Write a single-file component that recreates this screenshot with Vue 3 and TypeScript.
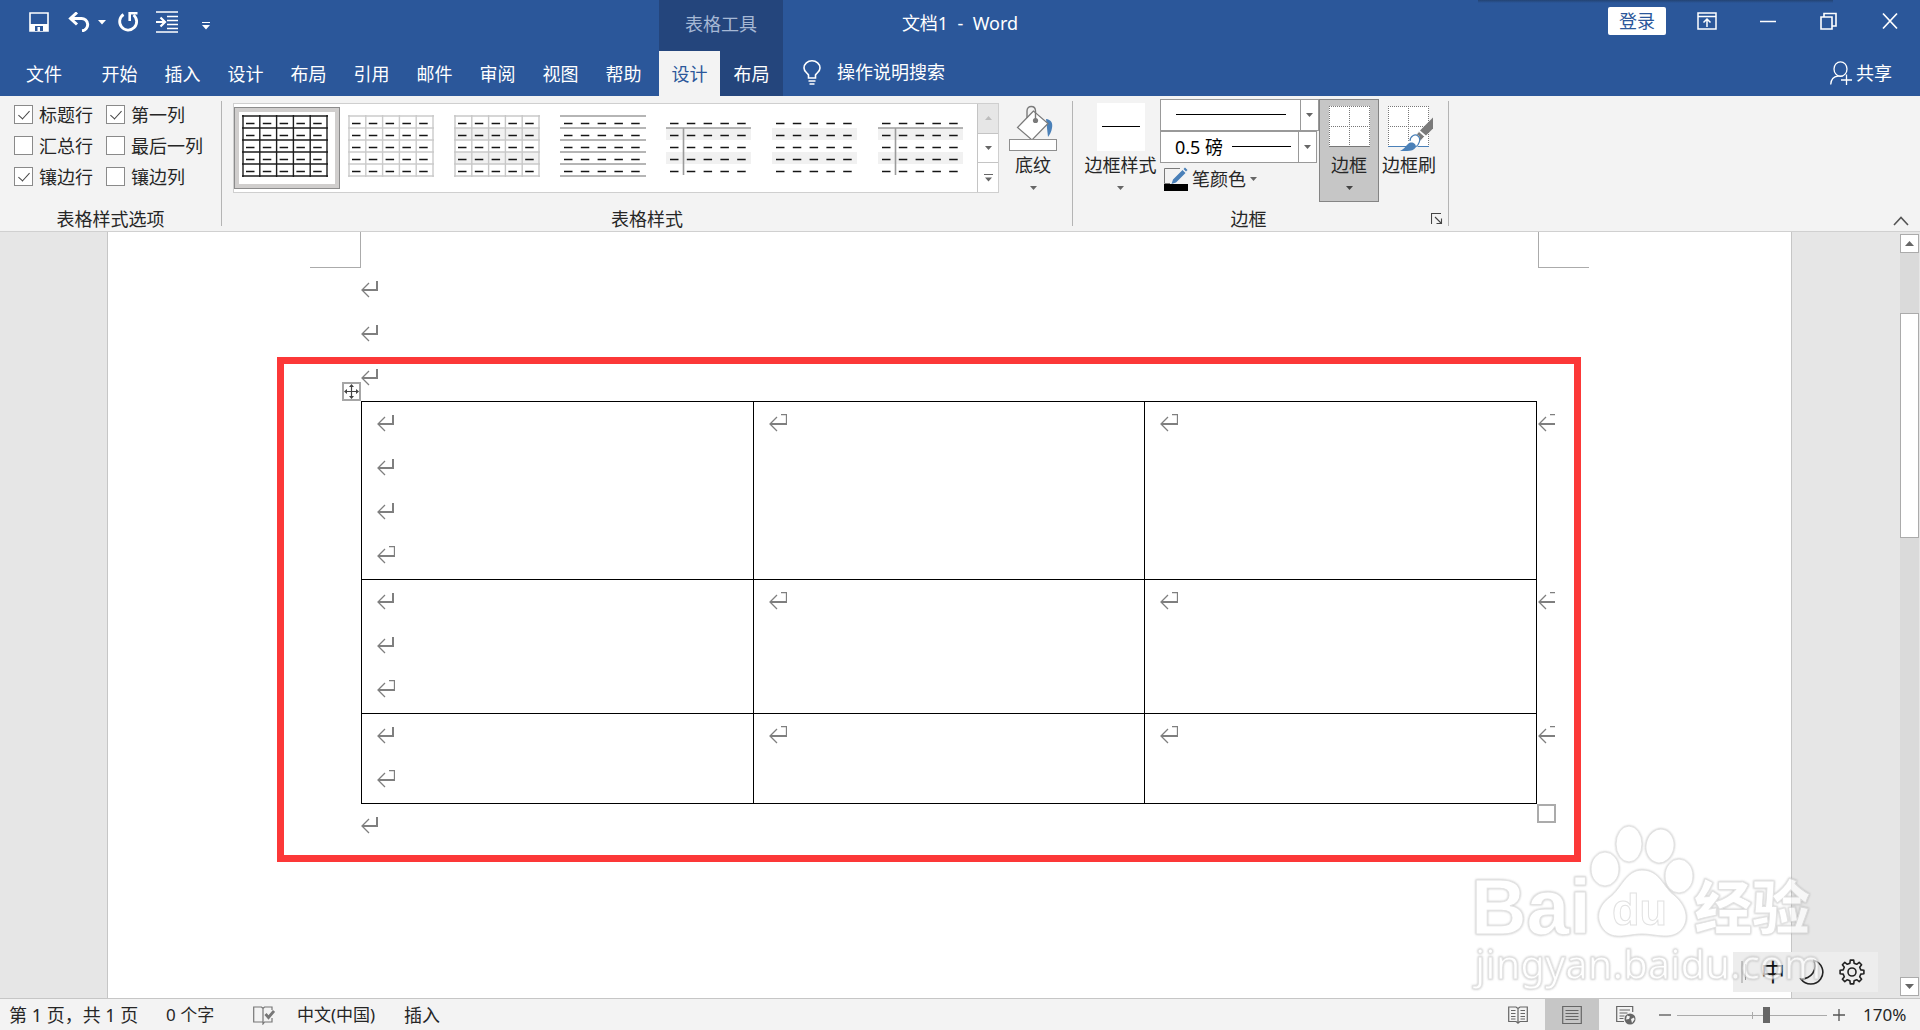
<script setup lang="ts">
import { ref } from 'vue'

interface StyleOption {
  id: string
  label: string
  checked: boolean
}

interface Thumb {
  id: number
  kind: 'grid' | 'lines' | 'plain'
  stroke: string
  banded: boolean
  cross: boolean
}

const tabs: string[] = ['开始', '插入', '设计', '布局', '引用', '邮件', '审阅', '视图', '帮助']

const options = ref<StyleOption[]>([
  { id: 'header-row', label: '标题行', checked: true },
  { id: 'first-col', label: '第一列', checked: true },
  { id: 'total-row', label: '汇总行', checked: false },
  { id: 'last-col', label: '最后一列', checked: false },
  { id: 'band-row', label: '镶边行', checked: true },
  { id: 'band-col', label: '镶边列', checked: false },
])

const thumbs: Thumb[] = [
  { id: 0, kind: 'grid', stroke: '#1c1c1c', banded: false, cross: false },
  { id: 1, kind: 'grid', stroke: '#cbcbcb', banded: false, cross: false },
  { id: 2, kind: 'grid', stroke: '#c8c8c8', banded: true, cross: false },
  { id: 3, kind: 'lines', stroke: '#9c9c9c', banded: false, cross: false },
  { id: 4, kind: 'plain', stroke: '#9c9c9c', banded: true, cross: true },
  { id: 5, kind: 'plain', stroke: '#9c9c9c', banded: true, cross: false },
  { id: 6, kind: 'plain', stroke: '#9c9c9c', banded: true, cross: true },
]
const steps: number[] = [0, 1, 2, 3, 4, 5]
const cells: number[] = [0, 1, 2, 3, 4]

// Paragraph count of the first cell in each table row
const rows: number[] = [4, 3, 2]
const zoom = ref<number>(60)
const search = ref<string>('')

function gear(teeth: number, outer: number, inner: number): string {
  const step = (Math.PI * 2) / teeth
  const points: string[] = []
  for (let i = 0; i < teeth; i++) {
    const a = i * step - Math.PI / 2
    const corners: [number, number][] = [
      [inner, a - step * 0.3],
      [outer, a - step * 0.18],
      [outer, a + step * 0.18],
      [inner, a + step * 0.3],
    ]
    for (const [r, t] of corners) {
      points.push(`${(13 + r * Math.cos(t)).toFixed(1)} ${(13 + r * Math.sin(t)).toFixed(1)}`)
    }
  }
  return `M${points.join('L')}Z`
}
const gearPath = gear(8, 12, 9)
</script>

<template>
  <div class="app">
    <header class="header">
      <div class="titlebar">
        <div class="title-left">
          <div class="quick">
            <button class="icon-btn save" aria-label="保存">
              <svg width="20" height="20" viewBox="0 0 20 20">
                <path d="M1 1h18v18H1z" fill="none" stroke="#fff" stroke-width="1.6" />
                <path d="M1 12h18v7H1z" fill="#fff" />
                <path d="M6 14h8v5h-3v-4H8.500v4H6z" fill="#2b579a" />
              </svg>
            </button>
            <button class="icon-btn undo" aria-label="撤消">
              <svg width="22" height="20" viewBox="0 0 22 20">
                <path d="M2 6.500h11a6 6 0 0 1 1 12.300" fill="none" stroke="#fff" stroke-width="3" />
                <path d="M9 .5L2.500 6.500L9 12.500" fill="none" stroke="#fff" stroke-width="3" />
              </svg>
            </button>
            <button class="icon-btn undo-more" aria-label="撤消选项">
              <svg width="8" height="5" viewBox="0 0 8 5"><path d="M0 0h8L4 4.500z" fill="#fff" /></svg>
            </button>
            <button class="icon-btn redo" aria-label="重复">
              <svg width="22" height="22" viewBox="0 0 22 22">
                <path d="M6.500 3.500A8.500 8.500 0 1 0 16.500 4" fill="none" stroke="#fff" stroke-width="2.800" />
                <path d="M20.500 2.200H12.700V10" fill="none" stroke="#fff" stroke-width="2.600" />
              </svg>
            </button>
            <button class="icon-btn indent" aria-label="增加缩进量">
              <svg width="22" height="22" viewBox="0 0 22 22">
                <path d="M0 1h22M11 5.500h11M11 9.500h11M11 13.500h11M11 17.500h11M0 21h22" stroke="#fff" stroke-width="1.300" />
                <path d="M0 11h8M4.500 6.500L9 11L4.500 15.500" fill="none" stroke="#fff" stroke-width="2.200" />
              </svg>
            </button>
            <button class="icon-btn customize" aria-label="自定义快速访问工具栏">
              <svg width="8" height="8" viewBox="0 0 8 8"><path d="M0 0h8v1H0zM0 3h8L4 7.500z" fill="#fff" /></svg>
            </button>
          </div>
          <div class="context-title">表格工具</div>
        </div>
        <h1 class="doc-title">文档1&nbsp; -&nbsp; Word</h1>
        <div class="window">
          <button class="login">登录</button>
          <button class="win-btn" aria-label="功能区显示选项">
            <svg width="20" height="18" viewBox="0 0 20 18">
              <path d="M1 1h18v16H1zM1 4.500h18M10 15V7.500M6.500 10.500L10 7l3.500 3.500" fill="none" stroke="#fff" stroke-width="1.500" />
            </svg>
          </button>
          <button class="win-btn" aria-label="最小化">
            <svg width="16" height="18" viewBox="0 0 16 18"><path d="M0 9.500h16" stroke="#fff" stroke-width="1.500" /></svg>
          </button>
          <button class="win-btn" aria-label="向下还原">
            <svg width="17" height="18" viewBox="0 0 17 18">
              <path d="M1 5h11v12H1zM4 5V1.500h12V14h-4" fill="none" stroke="#fff" stroke-width="1.600" />
            </svg>
          </button>
          <button class="win-btn" aria-label="关闭">
            <svg width="16" height="18" viewBox="0 0 16 18"><path d="M1 1.500L15 16.500M15 1.500L1 16.500" stroke="#fff" stroke-width="1.700" /></svg>
          </button>
        </div>
      </div>
      <nav class="tabs">
        <button class="tab file">文件</button>
        <button v-for="t in tabs" :key="t" class="tab">{{ t }}</button>
        <div class="context-tabs">
          <button class="tab active">设计</button>
          <button class="tab">布局</button>
        </div>
        <label class="tell-me">
          <svg width="18" height="25" viewBox="0 0 18 25">
            <path d="M5.500 18v-3C4 12.500 1 11.500 1 8a8 7.200 0 0 1 16 0c0 3.500-3 4.500-4.500 7v3zM5.500 21h7M6.500 24h5" fill="none" stroke="#fff" stroke-width="1.600" />
          </svg>
          <input v-model="search" type="text" placeholder="操作说明搜索" aria-label="操作说明搜索" />
        </label>
        <button class="share">
          <svg width="22" height="24" viewBox="0 0 22 24">
            <ellipse cx="10.500" cy="8" rx="6.500" ry="7.200" fill="none" stroke="#fff" stroke-width="1.300" />
            <path d="M.7 23.500C1 18.500 4 15.500 8 15c2 .6 3.500 .5 5 0M11 19h11M16.500 13.500v10.500" fill="none" stroke="#fff" stroke-width="1.300" />
          </svg>
          共享
        </button>
      </nav>
    </header>

    <section class="ribbon">
      <div class="group options-group">
        <div class="group-body option-grid">
          <label v-for="o in options" :key="o.id" class="option">
            <input v-model="o.checked" type="checkbox" />
            <span>{{ o.label }}</span>
          </label>
        </div>
        <div class="group-label"><span>表格样式选项</span></div>
      </div>
      <div class="sep"></div>

      <div class="group">
        <div class="group-body">
          <div class="gallery">
            <div class="thumbs">
              <button v-for="t in thumbs" :key="t.id" class="thumb" :class="{ selected: t.id === 0 }" :aria-label="'表格样式 ' + (t.id + 1)">
                <svg width="86" height="62" viewBox="0 0 86 62">
                  <template v-if="t.banded">
                    <rect x="0" y="13" width="85" height="12" fill="#f1f1f1" />
                    <rect x="0" y="37" width="85" height="12" fill="#f1f1f1" />
                  </template>
                  <template v-if="t.kind !== 'plain'">
                    <path v-for="s in steps" :key="'h' + s" :d="`M0 ${1 + s * 12}H86`" :stroke="t.stroke" stroke-width="1.400" />
                  </template>
                  <template v-if="t.kind === 'grid'">
                    <path v-for="s in steps" :key="'v' + s" :d="`M${1 + s * 16.8} 0V62`" :stroke="t.stroke" stroke-width="1.400" />
                  </template>
                  <path v-if="t.cross" d="M0 13H85M17.500 13V60" :stroke="t.stroke" stroke-width="1.600" />
                  <template v-for="r in cells" :key="'r' + r">
                    <path v-for="c in cells" :key="c" :d="`M${4 + c * 16.8} ${8.500 + r * 12}h8.500`" stroke="#151515" stroke-width="1.500" />
                  </template>
                </svg>
              </button>
            </div>
            <div class="gallery-nav">
              <button class="up" aria-label="上一行" disabled>
                <svg width="7" height="4" viewBox="0 0 7 4"><path d="M0 4h7L3.500 0z" fill="#bdbdbd" /></svg>
              </button>
              <button aria-label="下一行">
                <svg width="7" height="4" viewBox="0 0 7 4"><path d="M0 0h7L3.500 4z" fill="#666" /></svg>
              </button>
              <button aria-label="其他">
                <svg width="9" height="8" viewBox="0 0 9 8"><path d="M0 0h9v1H0zM1 3.500h7L4.500 7.500z" fill="#666" /></svg>
              </button>
            </div>
          </div>
          <button class="big shading">
            <svg width="48" height="48" viewBox="0 0 48 48">
              <path d="M37 16c5 .5 7 4 6 9c-.5 4-2.500 7-4 9z" fill="#4a80b8" />
              <path d="M24.500 8L8.500 24.500L23 37L39 20.500z" fill="#fff" stroke="#7a7a7a" stroke-width="1.200" />
              <path d="M18 15V8c0-6 8.500-6 8.500 0v8" fill="none" stroke="#7a7a7a" stroke-width="1.400" />
              <circle cx="26.500" cy="17.500" r="2.600" fill="#7a7a7a" />
              <rect x=".5" y="36.500" width="47" height="11" fill="#fff" stroke="#8e8e8e" />
            </svg>
            <span>底纹</span>
            <svg class="caret" width="7" height="4" viewBox="0 0 7 4"><path d="M0 0h7L3.500 4z" fill="#666" /></svg>
          </button>
        </div>
        <div class="group-label"><span>表格样式</span></div>
      </div>
      <div class="sep"></div>

      <div class="group">
        <div class="group-body">
          <button class="big border-style">
            <svg width="48" height="48" viewBox="0 0 48 48">
              <path d="M0 0h48v48H0z" fill="#fff" />
              <path d="M5 23.500h38" stroke="#000" />
            </svg>
            <span>边框样式</span>
            <svg class="caret" width="7" height="4" viewBox="0 0 7 4"><path d="M0 0h7L3.500 4z" fill="#666" /></svg>
          </button>
          <div class="pen">
            <div class="combo style">
              <select aria-label="笔样式"><option></option></select>
              <span class="rule"></span>
              <span class="drop"><svg width="7" height="4" viewBox="0 0 7 4"><path d="M0 0h7L3.500 4z" fill="#666" /></svg></span>
            </div>
            <div class="combo weight">
              <select aria-label="笔划粗细"><option>0.5 磅</option></select>
              <span class="rule"></span>
              <span class="drop"><svg width="7" height="4" viewBox="0 0 7 4"><path d="M0 0h7L3.500 4z" fill="#666" /></svg></span>
            </div>
            <button class="pen-color">
              <svg width="24" height="24" viewBox="0 0 24 24">
                <path d="M16 1.500H.5v15H6" fill="none" stroke="#7a7a7a" />
                <path d="M7.500 17l1.500-4.500L18.500 3l3 3l-9.500 9.500zM19.500 2l1.500-1.500l2.500 2.500L22 4.500z" fill="#4a80b8" />
                <rect y="17" width="24" height="7" fill="#000" />
              </svg>
              <span>笔颜色</span>
              <svg width="7" height="4" viewBox="0 0 7 4"><path d="M0 0h7L3.500 4z" fill="#666" /></svg>
            </button>
          </div>
          <button class="big borders">
            <svg width="48" height="48" viewBox="0 0 48 48">
              <path d="M4 3h41v41H4z" fill="#fff" />
              <path d="M4 3.500h41M4 23.500h41M4.500 3v40M24.500 3v40M44.500 3v40" stroke="#777" stroke-dasharray="1 1" />
              <path d="M4 43.500h41" stroke="#777" />
            </svg>
            <span>边框</span>
            <svg class="caret" width="7" height="4" viewBox="0 0 7 4"><path d="M0 0h7L3.500 4z" fill="#444" /></svg>
          </button>
          <button class="big painter">
            <svg width="48" height="48" viewBox="0 0 48 48">
              <path d="M3 3h41v41H3z" fill="#fff" />
              <path d="M3 3.500h41M3 23.500h41M3.500 3v40M23.500 3v40M43.500 3v40" stroke="#777" stroke-dasharray="1 1" />
              <path d="M3 43.500h41" stroke="#4a80b8" />
              <path d="M48 14.500v11l-7 7l-6-5z" fill="#7a7a7a" />
              <path d="M34 28.500l5.500 5l-4 4.500l-5.500-5z" fill="#7a7a7a" stroke="#fff" stroke-width=".8" />
              <path d="M19 41l5-3.500c0-5 5-8 9-5.500c4 3 2 10-2 13l-6 1z" fill="#fff" />
              <path d="M25 38c0-5 5-7.500 8-5c3.500 3 1 9-2.500 11" fill="none" stroke="#4a80b8" stroke-width="1.200" />
              <path d="M15 48c4-2 5-4 8-7c3-3 8-1 8 3c-2 3-5 4-9 4z" fill="#4a80b8" />
            </svg>
            <span>边框刷</span>
          </button>
        </div>
        <div class="group-label">
          <span>边框</span>
          <button class="launcher" aria-label="边框和底纹">
            <svg width="12" height="12" viewBox="0 0 12 12">
              <path d="M.5 11V.5H10M4 4l6 6M10.500 5.500v5h-5" fill="none" stroke="#444" stroke-width="1.100" />
            </svg>
          </button>
        </div>
      </div>
      <div class="sep"></div>
      <button class="collapse" aria-label="折叠功能区">
        <svg width="16" height="10" viewBox="0 0 16 10"><path d="M1 9L8 1.500L15 9" fill="none" stroke="#555" stroke-width="1.600" /></svg>
      </button>
    </section>

    <main class="workspace">
      <div class="canvas">
        <article class="page">
          <div class="corners">
            <span class="corner left"></span>
            <span class="corner right"></span>
          </div>
          <div class="body">
            <p v-for="n in 2" :key="n" class="para">
              <svg width="18" height="20" viewBox="0 0 18 20"><path d="M16 1v10M1 10h16" class="bold" /><path d="M8 3L1 10l7 7" class="thin" /></svg>
            </p>
            <div class="marked">
              <p class="para">
                <svg width="18" height="20" viewBox="0 0 18 20"><path d="M16 1v10M1 10h16" class="bold" /><path d="M8 3L1 10l7 7" class="thin" /></svg>
              </p>
              <table class="grid">
                <colgroup><col /><col /><col /><col class="end" /></colgroup>
                <tbody>
                  <tr v-for="(count, r) in rows" :key="r">
                    <td>
                      <p v-for="n in count" :key="n" class="para">
                        <svg v-if="n < count" width="18" height="20" viewBox="0 0 18 20"><path d="M16 1v10M1 10h16" class="bold" /><path d="M8 3L1 10l7 7" class="thin" /></svg>
                        <svg v-else width="18" height="20" viewBox="0 0 18 20"><path d="M1 10h16" class="bold" /><path d="M8 3L1 10l7 7M12 .5h5.500V11" class="thin" /></svg>
                      </p>
                    </td>
                    <td v-for="c in 2" :key="c">
                      <p class="para">
                        <svg width="18" height="20" viewBox="0 0 18 20"><path d="M1 10h16" class="bold" /><path d="M8 3L1 10l7 7M12 .5h5.500V11" class="thin" /></svg>
                      </p>
                    </td>
                    <td class="row-end">
                      <p class="para">
                        <svg width="18" height="20" viewBox="0 0 18 20"><path d="M1 10h16" class="bold" /><path d="M8 3L1 10l7 7M12 .5h5" class="thin" /></svg>
                      </p>
                    </td>
                  </tr>
                </tbody>
              </table>
              <p class="para">
                <svg width="18" height="20" viewBox="0 0 18 20"><path d="M16 1v10M1 10h16" class="bold" /><path d="M8 3L1 10l7 7" class="thin" /></svg>
              </p>
              <svg class="mover" width="19" height="19" viewBox="0 0 19 19">
                <rect x="1" y="1" width="17" height="17" fill="#fff" stroke="#a6a6a6" stroke-width="2" />
                <path d="M9.500 3.500v12M3.500 9.500h12" stroke="#444" stroke-width="1.200" />
                <path d="M9.500 2l2.500 3H7zM9.500 17l2.500-3H7zM2 9.500l3-2.500v5zM17 9.500l-3-2.500v5z" fill="#444" />
              </svg>
              <span class="resizer"></span>
              <div class="frame"></div>
            </div>
          </div>
        </article>
      </div>
      <div class="scrollbar">
        <button aria-label="向上滚动"><svg width="9" height="5" viewBox="0 0 9 5"><path d="M0 5h9L4.500 0z" fill="#666" /></svg></button>
        <div class="track"><div class="handle"></div></div>
        <button aria-label="向下滚动"><svg width="9" height="5" viewBox="0 0 9 5"><path d="M0 0h9L4.500 5z" fill="#666" /></svg></button>
      </div>

      <div class="ime">
        <svg width="6" height="22" viewBox="0 0 6 22"><path d="M1 0v22M4.500 3v16" stroke="#999" /></svg>
        <span>中</span>
        <svg width="26" height="26" viewBox="0 0 26 26"><path d="M15 1.500A12 12 0 1 1 2 20C12 20 19 11 15 1.500z" fill="none" stroke="#222" stroke-width="1.600" /></svg>
        <svg width="26" height="26" viewBox="0 0 26 26">
          <path :d="gearPath" fill="none" stroke="#222" stroke-width="1.600" stroke-linejoin="round" />
          <circle cx="13" cy="13" r="4" fill="none" stroke="#222" stroke-width="1.600" />
        </svg>
      </div>
      <svg class="watermark" width="350" height="170" viewBox="0 0 350 170">
        <g class="wm">
          <ellipse cx="135" cy="48" rx="14" ry="17" />
          <ellipse cx="159" cy="23" rx="13" ry="18" />
          <ellipse cx="190" cy="25" rx="14" ry="17" transform="rotate(10 190 25)" />
          <ellipse cx="209" cy="55" rx="14" ry="17" />
          <path d="M172 49C190 49 193 66 204 74C216 84 220 98 212 108C202 120 186 113 172 113C158 113 144 120 134 109C124 97 129 84 140 76C151 68 156 49 172 49Z" />
          <text x="1" y="113" class="latin">Bai</text>
          <text x="142" y="104" class="du">du</text>
          <text x="224" y="108" class="cjk">经验</text>
          <text x="5" y="158" class="url">jingyan.baidu.com</text>
        </g>
      </svg>
    </main>

    <footer class="status">
      <span class="pages">第 1 页，共 1 页</span>
      <span class="words">0 个字</span>
      <button class="proof" aria-label="校对">
        <svg width="22" height="20" viewBox="0 0 22 20">
          <path d="M10 17H.7V2H8.500L10 3.500L11.500 2H19v3M19 13v4h-7.500L10 19V3.500" fill="none" stroke="#777" stroke-width="1.200" />
          <path d="M12.500 9l3 3.500L21 6" fill="none" stroke="#777" stroke-width="2.800" />
        </svg>
      </button>
      <span class="lang">中文(中国)</span>
      <span class="mode">插入</span>
      <div class="views">
        <button aria-label="阅读视图">
          <svg width="20" height="20" viewBox="0 0 20 20">
            <path d="M.7 2H8l2 1.500L12 2h7.300v14.500H12L10 18l-2-1.500H.7zM10 3v16M3 5.500h4.500M3 8.500h4.500M3 11.500h4.500M3 14h4.500M12.500 5.500H17M12.500 8.500H17M12.500 11.500H17M12.500 14H17" fill="none" stroke="#666" stroke-width="1.200" />
          </svg>
        </button>
        <button class="on" aria-label="页面视图">
          <svg width="20" height="20" viewBox="0 0 20 20">
            <path d="M.7 1.500h18.600v17H.7zM3.500 5.500h13M3.500 8.500h13M3.500 11.500h13M3.500 14.500h13" fill="none" stroke="#666" stroke-width="1.200" />
          </svg>
        </button>
        <button aria-label="Web 版式视图">
          <svg width="20" height="20" viewBox="0 0 20 20">
            <path d="M8 16.500H.7V1.500h16V7M3.500 5h10.500M3.500 8h8M3.500 11h5M3.500 13.500h4" fill="none" stroke="#666" stroke-width="1.200" />
            <circle cx="14" cy="14" r="5.500" fill="#666" />
            <path d="M11 10.500l3 1l-1 2.500l-3 .5zM15 14l3-1.500l.5 2l-2.500 3.500z" fill="#f3f3f3" />
          </svg>
        </button>
      </div>
      <button class="zoom-btn" aria-label="缩小"><svg width="12" height="12" viewBox="0 0 12 12"><path d="M0 6h12" stroke="#555" stroke-width="1.300" /></svg></button>
      <input v-model.number="zoom" class="zoom" type="range" min="0" max="100" aria-label="显示比例" />
      <button class="zoom-btn" aria-label="放大"><svg width="12" height="12" viewBox="0 0 12 12"><path d="M0 6h12M6 0v12" stroke="#555" stroke-width="1.300" /></svg></button>
      <span class="percent">170%</span>
    </footer>
  </div>
</template>

<style>
body {
  margin: 0;
}
</style>

<style scoped>
.app {
  display: flex;
  flex-direction: column;
  min-height: 100vh;
  font: 18px/24px "Noto Sans", "Noto Sans CJK SC", sans-serif;
  color: #262626;
  background: #f3f3f3;
}
.app * {
  box-sizing: border-box;
}
button {
  padding: 0;
  border: 0;
  background: none;
  font: inherit;
  color: inherit;
  display: flex;
  align-items: center;
  justify-content: center;
  white-space: nowrap;
}
svg {
  display: block;
  flex: none;
}

/* Title bar */
.header {
  position: relative;
  background: #2b579a;
  color: #fff;
}
.header::after {
  content: "";
  position: absolute;
  top: 0;
  right: 87px;
  width: 355px;
  height: 3px;
  background: linear-gradient(#234373, #2b579a);
}
.titlebar {
  display: grid;
  grid-template-columns: 1fr auto 1fr;
  height: 51px;
}
.title-left {
  display: flex;
}
.quick {
  display: flex;
  align-items: center;
  width: 659px;
  height: 44px;
  padding-left: 29px;
}
.undo {
  margin-left: 19px;
}
.undo-more {
  margin-left: 8px;
}
.redo {
  margin-left: 11px;
}
.indent {
  margin-left: 17px;
}
.customize {
  margin: 7px 0 0 24px;
}
.context-title {
  width: 124px;
  background: #24457c;
  color: #a6b8d5;
  line-height: 48px;
  text-align: center;
}
.doc-title {
  margin: 0;
  font-size: 18px;
  font-weight: 400;
  line-height: 46px;
  white-space: nowrap;
}
.window {
  display: flex;
  justify-content: flex-end;
  align-items: center;
  height: 42px;
}
.login {
  width: 58px;
  height: 28px;
  margin-right: 10px;
  border-radius: 2px;
  background: #fff;
  color: #2b579a;
}
.win-btn {
  width: 61px;
  height: 42px;
}
.tabs {
  display: flex;
  height: 45px;
}
.tab {
  width: 63px;
  height: 45px;
}
.tab.file {
  width: 88px;
}
.context-tabs {
  display: flex;
  margin-left: 4px;
  background: #24457c;
}
.tab.active {
  width: 61px;
  background: #f3f3f3;
  color: #2b579a;
}
.tell-me {
  display: flex;
  align-items: center;
  gap: 16px;
  margin-left: 20px;
  height: 42px;
}
.tell-me input {
  width: 240px;
  padding: 0;
  border: 0;
  outline: 0;
  background: none;
  font: inherit;
  color: #fff;
}
.tell-me input::placeholder {
  color: #fff;
  opacity: 1;
}
.share {
  gap: 4px;
  height: 43px;
  margin: 0 28px 0 auto;
}

/* Ribbon */
.ribbon {
  display: flex;
  height: 136px;
  padding-top: 3px;
  border-bottom: 1px solid #d0d0d0;
}
.sep {
  width: 1px;
  margin: 2px 0 5px;
  background: #b4b4b4;
}
.group {
  display: flex;
  flex-direction: column;
}
.group-body {
  display: flex;
  align-items: flex-start;
  height: 107px;
}
.group-label {
  display: flex;
  height: 24px;
  line-height: 26px;
}
.group-label span {
  flex: 1;
  text-align: center;
}
.options-group {
  width: 221px;
}
.option-grid {
  display: grid;
  grid-template-columns: 92px 1fr;
  grid-auto-rows: 31px;
  align-content: start;
  padding-left: 14px;
}
.option {
  display: flex;
  align-items: center;
  height: 31px;
  gap: 6px;
  white-space: nowrap;
}
.option input {
  appearance: none;
  position: relative;
  width: 19px;
  height: 19px;
  margin: 0;
  border: 1px solid #8a8a8a;
  background: #fff;
}
.option input:checked::after {
  content: "";
  position: absolute;
  left: 6px;
  top: 2px;
  width: 5px;
  height: 10px;
  border: solid #444;
  border-width: 0 1px 1px 0;
  transform: rotate(42deg);
}
.gallery {
  display: flex;
  width: 766px;
  height: 90px;
  margin: 4px 0 0 11px;
  border: 1px solid #cfcfcf;
  background: #fff;
}
.thumbs {
  display: flex;
  flex: 1;
  padding-top: 3px;
}
.thumb {
  align-items: flex-start;
  justify-content: flex-start;
  width: 106px;
  height: 82px;
  padding: 8px;
}
.thumb.selected {
  padding: 7px;
  border: 1px solid #8c8c8c;
  background: #fff;
  box-shadow: inset 0 0 0 4px #d0cecd;
}
.gallery-nav {
  display: flex;
  flex-direction: column;
  width: 21px;
  border-left: 1px solid #c4c4c4;
}
.gallery-nav button {
  flex: 1;
}
.gallery-nav button + button {
  border-top: 1px solid #c4c4c4;
}
.gallery-nav .up {
  background: #e6e6e6;
}
.big {
  flex-direction: column;
  justify-content: flex-start;
  width: 60px;
  height: 103px;
  padding-top: 4px;
}
.big span {
  margin-top: 2px;
}
.caret {
  margin-top: 9px;
}
.shading {
  margin: 0 9px 0 4px;
}
.border-style {
  width: 77px;
  margin-left: 9px;
  margin-right: 1px;
}
.borders {
  padding-top: 3px;
  border: 1px solid #848484;
  background: #c6c6c6;
}
.painter {
  margin-right: 9px;
}
.pen {
  width: 159px;
}
.combo {
  position: relative;
  height: 32px;
}
.combo select {
  appearance: none;
  width: 100%;
  height: 32px;
  padding: 0 0 0 14px;
  border: 1px solid #999;
  border-radius: 0;
  background: #fff;
  font: inherit;
  color: #000;
}
.combo.weight {
  width: 157px;
}
.rule {
  position: absolute;
  top: 15px;
  left: 16px;
  right: 33px;
  height: 1px;
  background: #000;
}
.weight .rule {
  left: 72px;
  right: 26px;
}
.drop {
  position: absolute;
  top: 1px;
  right: 1px;
  bottom: 1px;
  width: 18px;
  display: flex;
  align-items: center;
  justify-content: center;
  border-left: 1px solid #999;
  pointer-events: none;
}
.pen-color {
  gap: 4px;
  height: 32px;
  padding-left: 4px;
}
.launcher {
  width: 24px;
  height: 24px;
  padding: 2px 0 0 2px;
}
.collapse {
  align-self: flex-end;
  margin: 0 11px 5px auto;
}

/* Document area */
.workspace {
  position: relative;
  display: flex;
  flex: 1;
  background: #e6e6e6;
}
.canvas {
  display: flex;
  flex: 1;
  padding: 0 108px 0 107px;
}
.page {
  flex: 1;
  border: solid #c6c6c6;
  border-width: 0 1px;
  background: #fff;
}
.corners {
  display: flex;
  justify-content: space-between;
  margin: 0 202px;
}
.corner {
  width: 51px;
  height: 36px;
  border: solid #ababab;
}
.corner.left {
  border-width: 0 1px 1px 0;
}
.corner.right {
  border-width: 0 0 1px 1px;
}
.body {
  margin: 0 253px;
}
.para {
  display: flex;
  align-items: center;
  height: 44px;
  margin: 0;
}
.para path {
  fill: none;
  stroke: #7f7f7f;
}
.para .bold {
  stroke-width: 2;
}
.para .thin {
  stroke-width: 1.3;
}
.marked {
  position: relative;
}
.grid {
  table-layout: fixed;
  width: calc(100% + 18px);
  margin-top: 1px;
  border-collapse: collapse;
}
.grid .end {
  width: 20px;
}
.grid td {
  padding: 0 15px 1px;
  border: 1px solid #000;
  vertical-align: top;
}
.grid .row-end {
  padding: 0 0 0 1px;
  border-width: 0 0 0 1px;
}
.mover {
  position: absolute;
  top: 26px;
  left: -19px;
}
.resizer {
  position: absolute;
  right: -18px;
  bottom: 25px;
  width: 19px;
  height: 19px;
  border: 2px solid #ababab;
  background: #fff;
}
.frame {
  position: absolute;
  top: 1px;
  right: -43px;
  bottom: -14px;
  left: -84px;
  border: 7px solid #fc3838;
}
.scrollbar {
  display: flex;
  flex-direction: column;
  width: 20px;
  padding: 2px 1px 2px 0;
}
.scrollbar button {
  width: 19px;
  height: 19px;
  border: 1px solid #ababab;
  background: #fff;
}
.track {
  flex: 1;
  padding-top: 60px;
  background: #dadada;
}
.handle {
  height: 225px;
  border: 1px solid #ababab;
  background: #fff;
}
.ime {
  position: absolute;
  right: 42px;
  bottom: 6px;
  display: flex;
  align-items: center;
  gap: 14px;
  width: 145px;
  height: 40px;
  padding-left: 8px;
  background: #ededed;
  font-size: 24px;
  color: #111;
}
.watermark {
  position: absolute;
  right: 100px;
  bottom: 7px;
  overflow: visible;
  pointer-events: none;
}
.wm {
  fill: #fff;
  stroke: #d6d6d6;
  stroke-width: 1;
  opacity: 0.7;
  filter: drop-shadow(0 0 1px rgba(110, 110, 110, 0.6));
}
.latin {
  font: 700 77px "Liberation Sans", sans-serif;
}
.du {
  font: 700 45px "Liberation Sans", sans-serif;
}
.cjk {
  font: 900 58px "Noto Sans CJK SC", sans-serif;
}
.url {
  font: 400 40px "Noto Sans", sans-serif;
}

/* Status bar */
.status {
  display: flex;
  align-items: center;
  height: 32px;
  padding-left: 9px;
  border-top: 1px solid #c6c6c6;
  white-space: nowrap;
}
.pages {
  width: 157px;
}
.words,
.lang {
  font-size: 17px;
}
.words {
  width: 87px;
}
.lang {
  width: 107px;
  margin-left: 22px;
}
.views {
  display: flex;
  margin-left: auto;
}
.views button {
  width: 54px;
  height: 31px;
}
.views .on {
  background: #c6c6c6;
}
.zoom-btn {
  width: 12px;
  height: 31px;
}
.views + .zoom-btn {
  margin-left: 6px;
}
.zoom {
  appearance: none;
  width: 150px;
  height: 16px;
  margin: 0 6px;
  background:
    linear-gradient(#aaa, #aaa) 75px 5px / 1px 7px no-repeat,
    linear-gradient(#aaa, #aaa) 0 8px / 100% 1px no-repeat;
}
.zoom::-webkit-slider-thumb {
  appearance: none;
  width: 7px;
  height: 16px;
  background: #666;
}
.percent {
  width: 57px;
  margin-left: 18px;
  font-size: 17px;
}
</style>
